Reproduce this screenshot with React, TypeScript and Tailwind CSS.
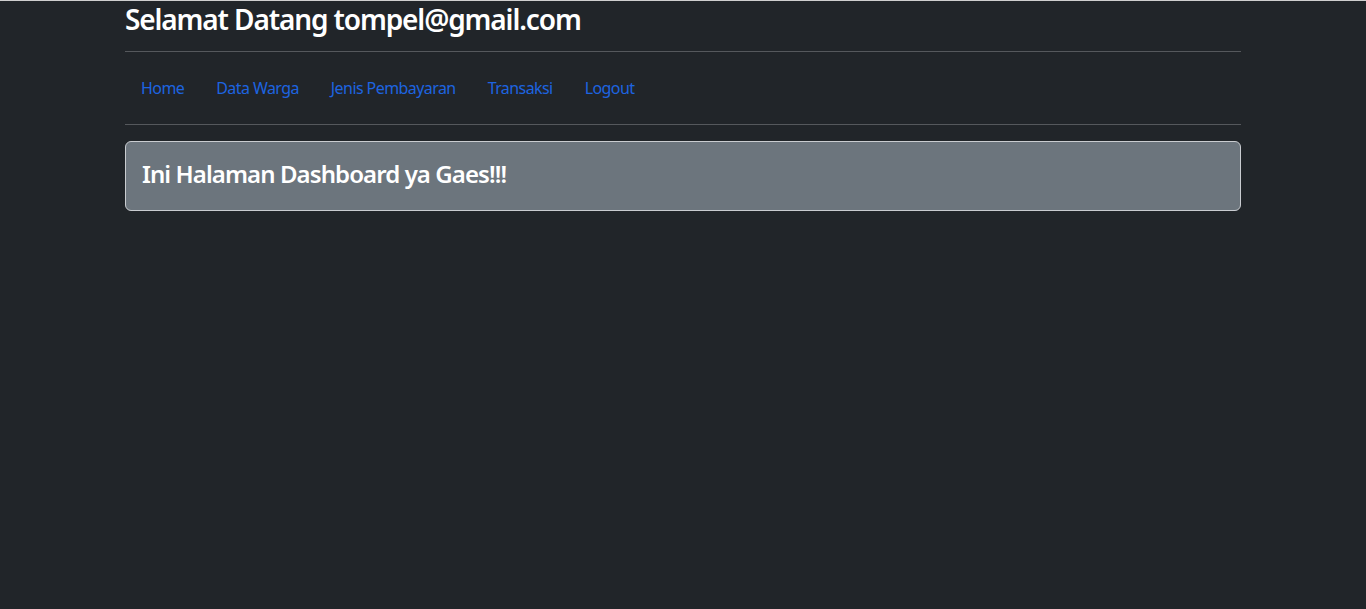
import React from 'react';

const links = ["Home", "Data Warga", "Jenis Pembayaran", "Transaksi", "Logout"];

function App() {
    return (
        <div className="min-h-[609px] bg-[#212529] border-t border-[#cfcfcf] text-[#dee2e6] font-['Noto_Sans','Open_Sans',sans-serif]">
            <div className="mx-auto w-[1140px] px-3">
                <h3 className="pt-[2px] text-[28px] leading-[1.2] font-semibold tracking-[-0.04em] text-white">
                    Selamat Datang tompel@gmail.com
                </h3>
                <hr className="mt-[14px] mb-4 border-t border-[#55585c]" />

                {/* nav */}
                <ul className="flex tracking-[-0.036em]">
                    {links.map((link, index) => (
                        <li key={index}>
                            <a href="#" className="block px-4 py-2 text-base leading-6 text-[#1d64e0]">
                                {link}
                            </a>
                        </li>
                    ))}
                </ul>
                <hr className="my-4 border-t border-[#55585c]" />

                <div className="rounded-md border border-[#c9ccd0] bg-[#6c757d] p-4">
                    <h4 className="pt-[2px] mb-[6px] text-2xl leading-[1.2] font-semibold tracking-[-0.038em] text-white">
                        Ini Halaman Dashboard ya Gaes!!!
                    </h4>
                </div>
            </div>
        </div>
    );
}

export default App;
